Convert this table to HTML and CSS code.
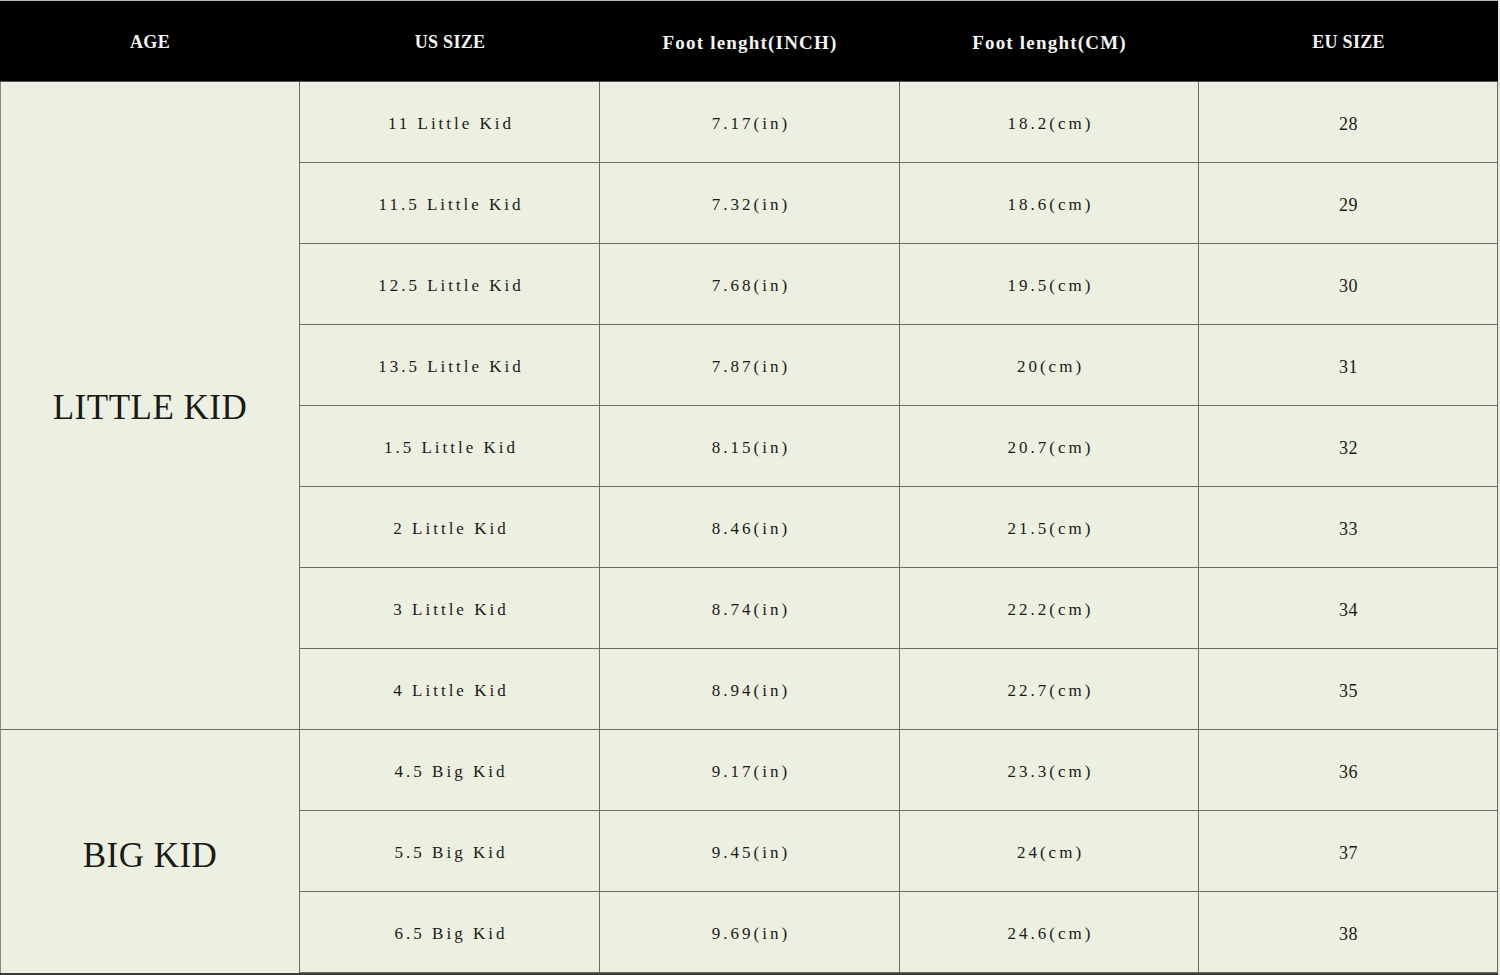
FILE: index.html
```html
<!DOCTYPE html>
<html lang="en">
<head>
<meta charset="utf-8">
<title>Kids Size Chart</title>
<link rel="stylesheet" href="styles.css">
</head>
<body>
<div class="chart">
  <div class="hd narrow">AGE</div>
  <div class="hd narrow">US SIZE</div>
  <div class="hd">Foot lenght(INCH)</div>
  <div class="hd">Foot lenght(CM)</div>
  <div class="hd narrow">EU SIZE</div>

  <div class="age little">LITTLE KID</div>
  <div class="c">11 Little Kid</div><div class="c">7.17(in)</div><div class="c">18.2(cm)</div><div class="c eu">28</div>
  <div class="c">11.5 Little Kid</div><div class="c">7.32(in)</div><div class="c">18.6(cm)</div><div class="c eu">29</div>
  <div class="c">12.5 Little Kid</div><div class="c">7.68(in)</div><div class="c">19.5(cm)</div><div class="c eu">30</div>
  <div class="c">13.5 Little Kid</div><div class="c">7.87(in)</div><div class="c">20(cm)</div><div class="c eu">31</div>
  <div class="c">1.5 Little Kid</div><div class="c">8.15(in)</div><div class="c">20.7(cm)</div><div class="c eu">32</div>
  <div class="c">2 Little Kid</div><div class="c">8.46(in)</div><div class="c">21.5(cm)</div><div class="c eu">33</div>
  <div class="c">3 Little Kid</div><div class="c">8.74(in)</div><div class="c">22.2(cm)</div><div class="c eu">34</div>
  <div class="c">4 Little Kid</div><div class="c">8.94(in)</div><div class="c">22.7(cm)</div><div class="c eu">35</div>

  <div class="age big">BIG KID</div>
  <div class="c">4.5 Big Kid</div><div class="c">9.17(in)</div><div class="c">23.3(cm)</div><div class="c eu">36</div>
  <div class="c">5.5 Big Kid</div><div class="c">9.45(in)</div><div class="c">24(cm)</div><div class="c eu">37</div>
  <div class="c">6.5 Big Kid</div><div class="c">9.69(in)</div><div class="c">24.6(cm)</div><div class="c eu">38</div>
</div>
</body>
</html>
```
FILE: styles.css
```css
html, body {
  margin: 0;
  padding: 0;
  background: #e4e7dc;
}
.chart {
  display: grid;
  grid-template-columns: 300px 300px 300px 299px 299px;
  grid-template-rows: 82px repeat(11, 81px);
  width: 1498px;
  background: #ecf0e1;
  border-bottom: 2px solid #3a3a36;
  font-family: "Liberation Serif", "Times New Roman", serif;
  color: #1a1a18;
}
.hd {
  box-sizing: border-box;
  background: #000;
  color: #f4f4f0;
  border-top: 1px solid #b5b5b5;
  border-bottom: 1px solid #55554f;
  display: flex;
  align-items: center;
  justify-content: center;
  font-weight: bold;
  font-size: 19px;
  letter-spacing: 1.2px;
  padding-top: 3px;
}
.hd.narrow {
  font-size: 18px;
  letter-spacing: 0.3px;
}
.c {
  box-sizing: border-box;
  border-right: 1px solid #6c6c64;
  border-bottom: 1px solid #6c6c64;
  display: flex;
  align-items: center;
  justify-content: center;
  font-size: 17px;
  letter-spacing: 3px;
  padding-left: 3px;
  padding-top: 4px;
}
.c.eu {
  letter-spacing: 0.5px;
  font-size: 18px;
  padding-left: 1px;
}
.age {
  box-sizing: border-box;
  grid-column: 1;
  border-left: 1px solid #8a8a82;
  border-right: 1px solid #6c6c64;
  border-bottom: 1px solid #6c6c64;
  display: flex;
  align-items: center;
  justify-content: center;
  font-size: 35px;
  letter-spacing: 0.5px;
  padding-top: 5px;
}
.age.little {
  grid-row: 2 / span 8;
}
.age.big {
  grid-row: 10 / span 3;
  border-bottom: none;
  padding-top: 8px;
}
```
